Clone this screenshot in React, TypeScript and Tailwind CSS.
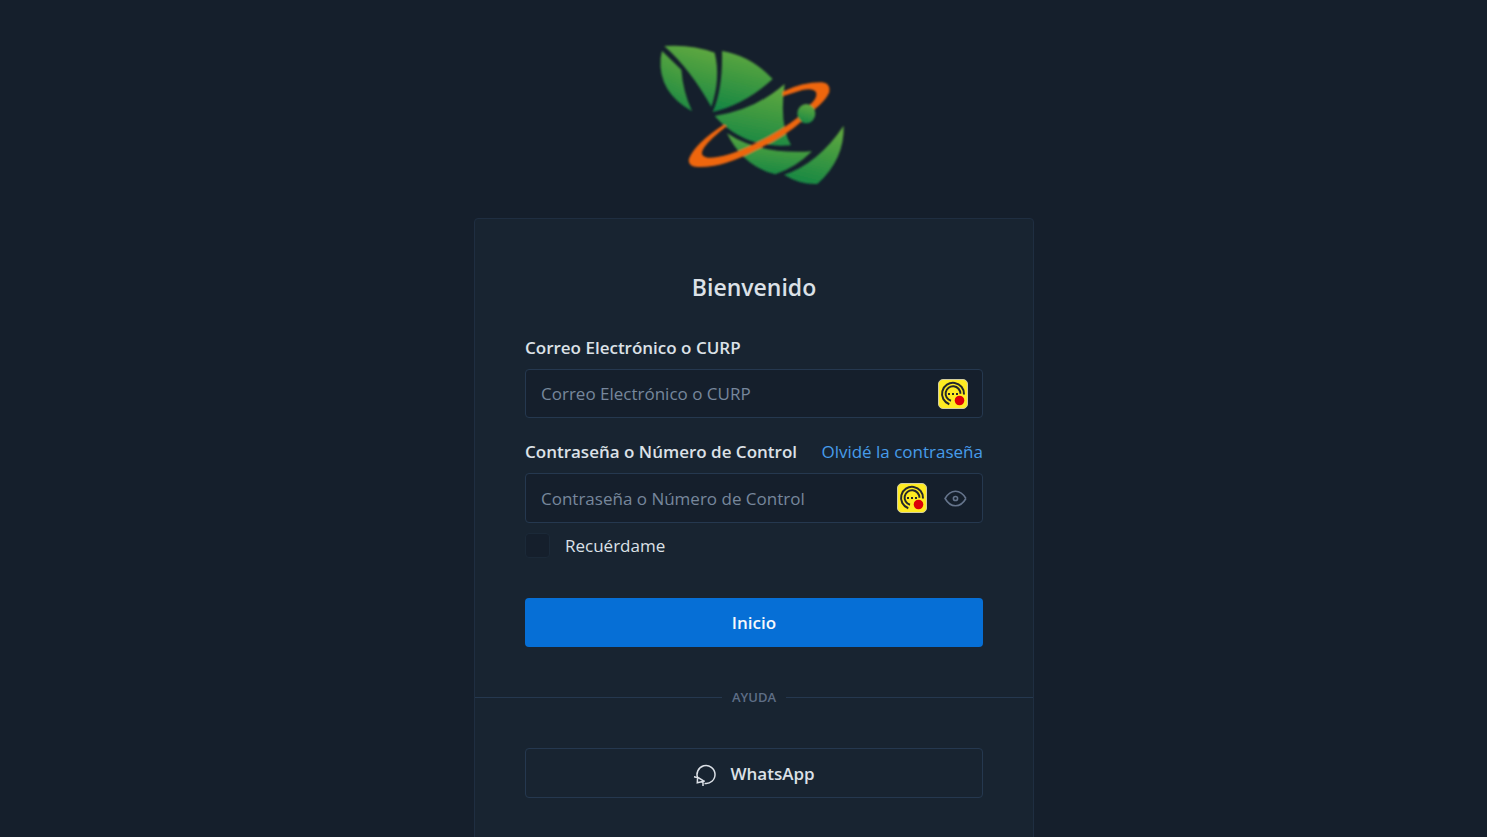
import React, { useState } from "react";

function Logo() {
  return (
    <svg viewBox="3 0 618 480" className="mx-auto block h-[160px] w-[206px]" role="img" aria-label="Logo">
      <defs>
        <linearGradient id="leaf" x1="0.6" y1="0" x2="0.35" y2="1">
          <stop offset="0" stopColor="#5fa83f" />
          <stop offset="1" stopColor="#178744" />
        </linearGradient>
        <filter id="soft" x="-5%" y="-5%" width="110%" height="110%">
          <feGaussianBlur stdDeviation="3" />
        </filter>
      </defs>
      <g filter="url(#soft)">
        <g fill="url(#leaf)">
          <path d="M36 48 L94 104 Q99 170 126 229 Q24 172 32 70 Z" />
          <path d="M43 33 Q125 27 194 53 Q213 130 184 216 Q122 104 43 33 Z" />
          <path d="M216 48 Q302 62 368 132 Q286 208 188 231 Q219 160 216 48 Z" />
          <path d="M404 147 Q387 270 423 331 Q284 344 194 243 Q314 225 404 147 Z" />
          <path d="M231 295 Q330 360 486 349 Q436 399 376 418 Q279 394 231 295 Z" />
          <path d="M581 272 Q584 373 502 447 Q452 450 402 419 Q504 386 581 272 Z" />
        </g>
        <path
          fill="#ee6611"
          d="M398 170 Q455 142 516 142 Q544 146 538 172 Q526 198 494 223 L479 210 Q502 190 499 174 Q493 158 457 165 L398 184 Z"
        />
        <path
          fill="#ee6611"
          d="M221 269 Q135 325 117 371 Q112 395 143 396 Q218 399 318 345 Q404 306 460 255 L450 242 Q388 292 310 328 Q230 369 174 368 Q144 363 163 337 Q182 311 230 274 Z"
        />
        <ellipse cx="469" cy="236" rx="27" ry="29" fill="url(#leaf)" />
      </g>
    </svg>
  );
}

function VaultIcon() {
  return (
    <svg viewBox="0 0 30 30" className="block size-[30px]" aria-hidden="true">
      <rect x="0.5" y="0.5" width="29" height="29" rx="4.5" fill="#ffeb22" stroke="#d2cda0" />
      <g fill="none" stroke="#25272b" strokeWidth="2">
        <path d="M11.3 25.2A11 11 0 1 1 26 15.5" />
        <path d="M13 21.8A7.4 7.4 0 1 1 22.4 14.8" />
      </g>
      <g fill="#25272b">
        <rect x="10" y="14" width="2" height="2" />
        <rect x="14" y="14" width="2" height="2" />
        <rect x="18" y="14" width="2" height="2" />
      </g>
      <circle cx="21.5" cy="21.5" r="4.8" fill="#dc0008" />
    </svg>
  );
}

function EyeIcon() {
  return (
    <svg viewBox="0 0 24 24" className="block size-[25px]" fill="none" stroke="#65748c" strokeWidth="1.5" aria-hidden="true">
      <circle cx="12" cy="12" r="2" />
      <path d="M22 12c-2.667 4.667 -6 7 -10 7s-7.333 -2.333 -10 -7c2.667 -4.667 6 -7 10 -7s7.333 2.333 10 7" />
    </svg>
  );
}

function ChatIcon() {
  return (
    <svg viewBox="0 0 25 25" className="block size-[25px]" fill="none" stroke="#dce1e7" strokeWidth="1.5" aria-hidden="true">
      <path d="M5 17.6A9 9 0 1 1 11.5 22.4" />
      <path d="M1 15.8Q6 16.2 10.5 19.8M4.6 16.4L4.3 21.8L11.8 20M10 20.4V25" />
    </svg>
  );
}

const field = "flex items-center rounded border border-[#25384f] bg-[#151f2c] pr-[14px]";
const input =
  "min-w-0 flex-1 bg-transparent pl-[15px] text-[#dce1e7] placeholder:text-[#77879c] outline-none";

export default function App() {
  const [show, setShow] = useState(false);
  const [remember, setRemember] = useState(false);

  return (
    <div className="min-h-screen bg-[#151f2c] pt-[35px] pl-[21px] font-['Open_Sans','Noto_Sans',sans-serif] text-[17px] leading-[25px] text-[#dce1e7]">
      <main className="mx-auto max-w-[560px]">
        <Logo />
        <div className="mt-[23px] rounded border border-[#1f2e41] bg-[#182431]">
          <form className="px-[50px] pt-[50px] pb-11" onSubmit={(e) => e.preventDefault()}>
            <h1 className="mb-[30px] text-center text-[23px] leading-9 font-semibold">Bienvenido</h1>

            <label htmlFor="email" className="mb-[9px] block font-semibold">
              Correo Electrónico o CURP
            </label>
            <div className={field}>
              <input id="email" type="text" placeholder="Correo Electrónico o CURP" className={`h-[47px] ${input}`} />
              <VaultIcon />
            </div>

            <div className="mt-[21px] mb-[9px] flex justify-between">
              <label htmlFor="password" className="font-semibold">
                Contraseña o Número de Control
              </label>
              <a href="#" className="text-[#479cea]">
                Olvidé la contraseña
              </a>
            </div>
            <div className={field}>
              <input
                id="password"
                type={show ? "text" : "password"}
                placeholder="Contraseña o Número de Control"
                className={`h-12 ${input}`}
              />
              <VaultIcon />
              <button type="button" aria-label="Mostrar contraseña" className="ml-4" onClick={() => setShow(!show)}>
                <EyeIcon />
              </button>
            </div>

            <label className="mt-[10px] flex items-center gap-[15px]">
              <input
                type="checkbox"
                checked={remember}
                onChange={(e) => setRemember(e.target.checked)}
                className="size-[25px] appearance-none rounded border border-[#1b2938] bg-[#151f2c] checked:bg-[#066fd1]"
              />
              Recuérdame
            </label>

            <button type="submit" className="mt-10 h-[49px] w-full rounded bg-[#066fd6] font-semibold text-[#f6f8fb]">
              Inicio
            </button>
          </form>

          <div className="flex items-center gap-[10px] text-[13px] leading-none font-semibold text-[#5e6e86]">
            <span className="h-px flex-1 bg-[#25384f]" />
            AYUDA
            <span className="h-px flex-1 bg-[#25384f]" />
          </div>

          <div className="px-[50px] pt-11 pb-[50px]">
            <a
              href="#"
              className="flex h-[50px] items-center justify-center gap-3 rounded border border-[#25384f] font-semibold"
            >
              <ChatIcon />
              WhatsApp
            </a>
          </div>
        </div>
      </main>
    </div>
  );
}
